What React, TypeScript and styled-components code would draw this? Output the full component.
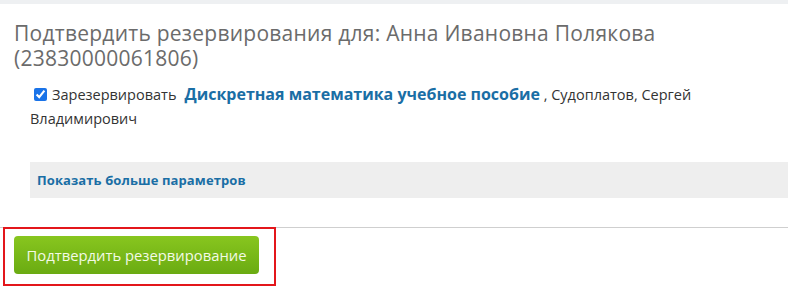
import React from "react";
import styled, { createGlobalStyle } from "styled-components";

const Global = createGlobalStyle`
  html, body { margin: 0; padding: 0; background: #fff; }
  body { font-family: "Open Sans", "Noto Sans", sans-serif; color: #333; }
`;

const TopBar = styled.div`
  height: 4px;
  background: #eef0f2;
`;

const Content = styled.div`
  padding: 17px 0 0 14px;
`;

const Title = styled.h2`
  margin: 0;
  font-size: 21px;
  line-height: 25px;
  letter-spacing: 0.25px;
  font-weight: 400;
  color: #6b6b6b;
`;

const Item = styled.p`
  margin: 11px 0 0 16px;
  font-size: 14.5px;
  line-height: 24px;
  color: #333;
`;

const Check = styled.input`
  width: 13px;
  height: 13px;
  margin: 0 5px 0 4px;
  vertical-align: -1px;
  accent-color: #1a73e8;
`;

const BookLink = styled.a`
  margin-left: 8px;
  font-size: 16px;
  line-height: 24px;
  font-weight: 700;
  color: #1a6ea5;
  text-decoration: none;
`;

const MoreBox = styled.div`
  margin: 31px 0 0 30px;
  height: 36px;
  background: #eeeeee;
  display: flex;
  align-items: center;
  padding-left: 7px;
`;

const MoreLink = styled.a`
  font-size: 13px;
  letter-spacing: 0.1px;
  font-weight: 700;
  color: #1a6ea5;
  text-decoration: none;
`;

const Footer = styled.div`
  position: relative;
  margin-top: 29px;
  border-top: 1px solid #cfcfcf;
  padding: 8px 0 12px 14px;
`;

const ConfirmButton = styled.button`
  width: 245px;
  height: 38px;
  border: none;
  border-radius: 4px;
  background: linear-gradient(#88c61f, #6aab12);
  color: #f3fae6;
  font-family: "Open Sans", "Noto Sans", sans-serif;
  font-size: 14.8px;
  padding: 0;
  cursor: pointer;
`;

const Highlight = styled.span`
  position: absolute;
  top: -1px;
  left: 3px;
  width: 273px;
  height: 59px;
  box-sizing: border-box;
  border: 2px solid #e3161b;
  pointer-events: none;
`;

export default function App() {
  return (
    <>
      <Global />
      <TopBar />
      <Content>
        <Title>
          Подтвердить резервирования для: Анна Ивановна Полякова (23830000061806)
        </Title>
        <Item>
          <Check type="checkbox" defaultChecked />
          Зарезервировать
          <BookLink href="#">Дискретная математика учебное пособие</BookLink> , Судоплатов, Сергей
          Владимирович
        </Item>
      </Content>
      <MoreBox>
        <MoreLink href="#">Показать больше параметров</MoreLink>
      </MoreBox>
      <Footer>
        <ConfirmButton>Подтвердить резервирование</ConfirmButton>
        <Highlight />
      </Footer>
    </>
  );
}
